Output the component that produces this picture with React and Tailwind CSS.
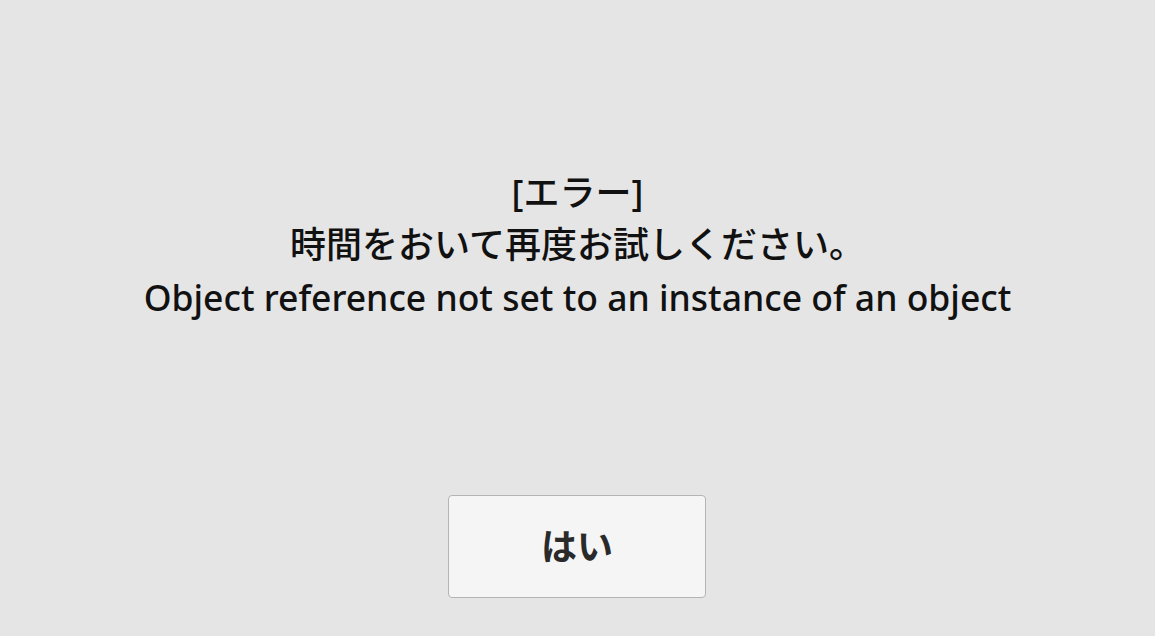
export default function App() {
  return (
    <div
      className="w-[1155px] h-[636px] bg-[#e5e5e5] flex flex-col items-center text-[#111111]"
      style={{ fontFamily: '"Noto Sans", "Noto Sans CJK JP", sans-serif' }}
    >
      <div className="mt-[167px] flex flex-col items-center text-[36px] leading-[52px] font-medium">
        <div>[エラー]</div>
        <div>時間をおいて再度お試しください。</div>
        <div className="text-[35.5px]">Object reference not set to an instance of an object</div>
      </div>
      <button className="mt-[172px] mr-[1px] w-[258px] h-[103px] bg-[#f5f5f5] border border-[#b4b4b4] rounded-[4px] flex items-center justify-center text-[36px] font-semibold text-[#2a2a2a]">
        はい
      </button>
    </div>
  );
}
